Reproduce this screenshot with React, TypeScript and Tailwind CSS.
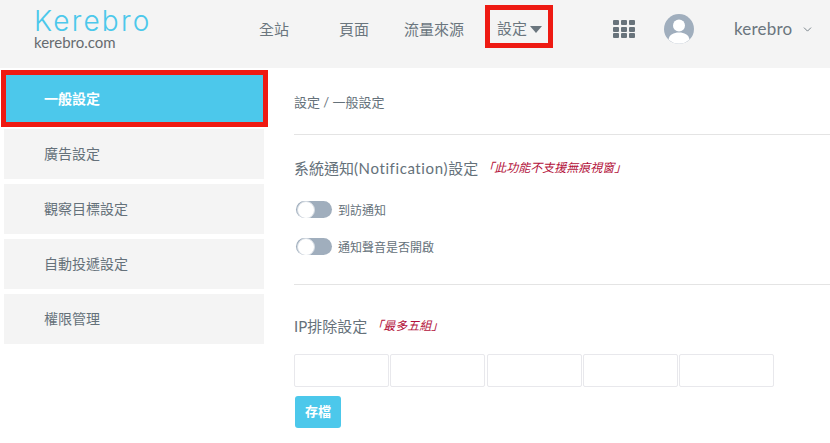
import { ChevronDown } from 'lucide-react';

const font = '[font-family:Lato,"Noto_Sans_CJK_TC",sans-serif]';

const navItems = ['全站', '頁面', '流量來源'];
const sideItems = ['廣告設定', '觀察目標設定', '自動投遞設定', '權限管理'];

const Toggle = ({ label }: { label: string }) => (
    <div className="flex items-center h-[20px] ml-[2px]">
        <div className="relative w-[36px] h-[17px] rounded-full bg-[#a0aebd] overflow-hidden">
            <div className="absolute left-[1px] top-0 w-[18px] h-[18px] rounded-full bg-white border border-[#d5dbe2]" />
        </div>
        <span className="ml-[6px] mt-[3px] text-[12px] text-[#65717a]">{label}</span>
    </div>
);

const Header = () => (
    <div className="flex h-[68px] bg-[#f4f4f4] flex-shrink-0">
        <div className="w-[246px] pl-[34px] pt-[9px] flex-shrink-0">
            <div className="text-[28px] leading-[24px] font-light tracking-[2.2px] text-[#4cc8eb] [font-family:Inter,sans-serif]">Kerebro</div>
            <div className="text-[15px] leading-[16px] mt-[1px] text-[#666b6f]">kerebro.com</div>
        </div>
        <div className="flex items-center text-[15px] text-[#6b767e] h-[58px]">
            {navItems.map((item, i) => (
                <span key={item} className={i === 0 ? 'ml-[13px] w-[80px]' : i === 1 ? 'w-[65px]' : 'w-[81px]'}>{item}</span>
            ))}
            <div className="flex items-center justify-center w-[68px] h-[43px] pl-[1px] border-[5px] border-[#ee1a12] mt-[-5px]">
                <span className="mt-[3px]">設定</span>
                <span className="ml-[3px] mt-[5px] w-0 h-0 border-x-[6px] border-x-transparent border-t-[7px] border-t-[#6b767e]" />
            </div>
        </div>
        <div className="flex items-center h-[58px] ml-[60px]">
            <div className="grid grid-cols-3 gap-[1.5px] w-[22px]">
                {Array.from({ length: 9 }).map((_, i) => (
                    <div key={i} className="h-[5px] rounded-[1px] bg-[#68737b]" />
                ))}
            </div>
            <svg className="ml-[29px]" width="30" height="30" viewBox="0 0 30 30">
                <circle cx="15" cy="15" r="15" fill="#a0aebd" />
                <circle cx="15" cy="11.5" r="6" fill="#fff" />
                <path d="M4.5 25.5c1-5 5-7 10.500-7s9.500 2 10.500 7a15 15 0 0 1-21 0z" fill="#fff" />
            </svg>
            <span className="ml-[40px] text-[17px] tracking-[0.2px] text-[#6b767e]">kerebro</span>
            <ChevronDown className="ml-[9px] w-[13px] h-[13px] text-[#5f6b74]" strokeWidth={1.5} />
        </div>
    </div>
);

const Sidebar = () => (
    <div className="w-[268px] flex-shrink-0 pt-[2px]">
        <div className="ml-[1px] h-[57px] border-[5px] border-[#ee1a12] bg-[#4cc8eb] flex items-center pl-[38px] text-[14px] font-bold text-white">
            一般設定
        </div>
        <div className="flex flex-col gap-[5px] pl-[4px] pr-[4px] mt-[2px]">
            {sideItems.map((item) => (
                <div key={item} className="h-[50px] bg-[#f4f4f4] flex items-center pl-[40px] pb-[2px] text-[14px] text-[#65717a]">
                    {item}
                </div>
            ))}
        </div>
    </div>
);

const Main = () => (
    <div className="flex-1 min-w-0 pl-[26px] text-[#65717a]">
        <div className="h-[67px] flex items-center pt-[4px] text-[13px] border-b border-[#e4e4e4]">設定 / 一般設定</div>
        <div className="h-[150px] pt-[21px] border-b border-[#e4e4e4]">
            <div className="flex items-center h-[24px]">
                <span className="text-[15px]">系統通知<span className="tracking-[0.6px]">(Notification)</span>設定</span>
                <span className="ml-[4px] text-[12px] italic text-[#b3103a]">「此功能不支援無痕視窗」</span>
            </div>
            <div className="mt-[19px] flex flex-col gap-[17px]">
                <Toggle label="到訪通知" />
                <Toggle label="通知聲音是否開啟" />
            </div>
        </div>
        <div className="pt-[29px]">
            <div className="flex items-center h-[24px]">
                <span className="text-[15px]">IP排除設定</span>
                <span className="ml-[4px] text-[12px] italic text-[#b3103a]">「最多五組」</span>
            </div>
            <div className="mt-[16px] flex gap-[1.25px]">
                {[0, 1, 2, 3, 4].map((i) => (
                    <input key={i} className="w-[95px] h-[33px] bg-white border border-[#e8e8ec] rounded-[2px]" />
                ))}
            </div>
            <button className="mt-[9px] ml-[1px] w-[46px] h-[32px] rounded-[3px] bg-[#4cc8eb] text-white text-[13px] font-bold">存檔</button>
        </div>
    </div>
);

const App = () => (
    <div className={`w-[830px] h-[443px] overflow-hidden bg-white flex flex-col ${font}`}>
        <Header />
        <div className="flex flex-1 min-h-0">
            <Sidebar />
            <Main />
        </div>
    </div>
);

export default App;
